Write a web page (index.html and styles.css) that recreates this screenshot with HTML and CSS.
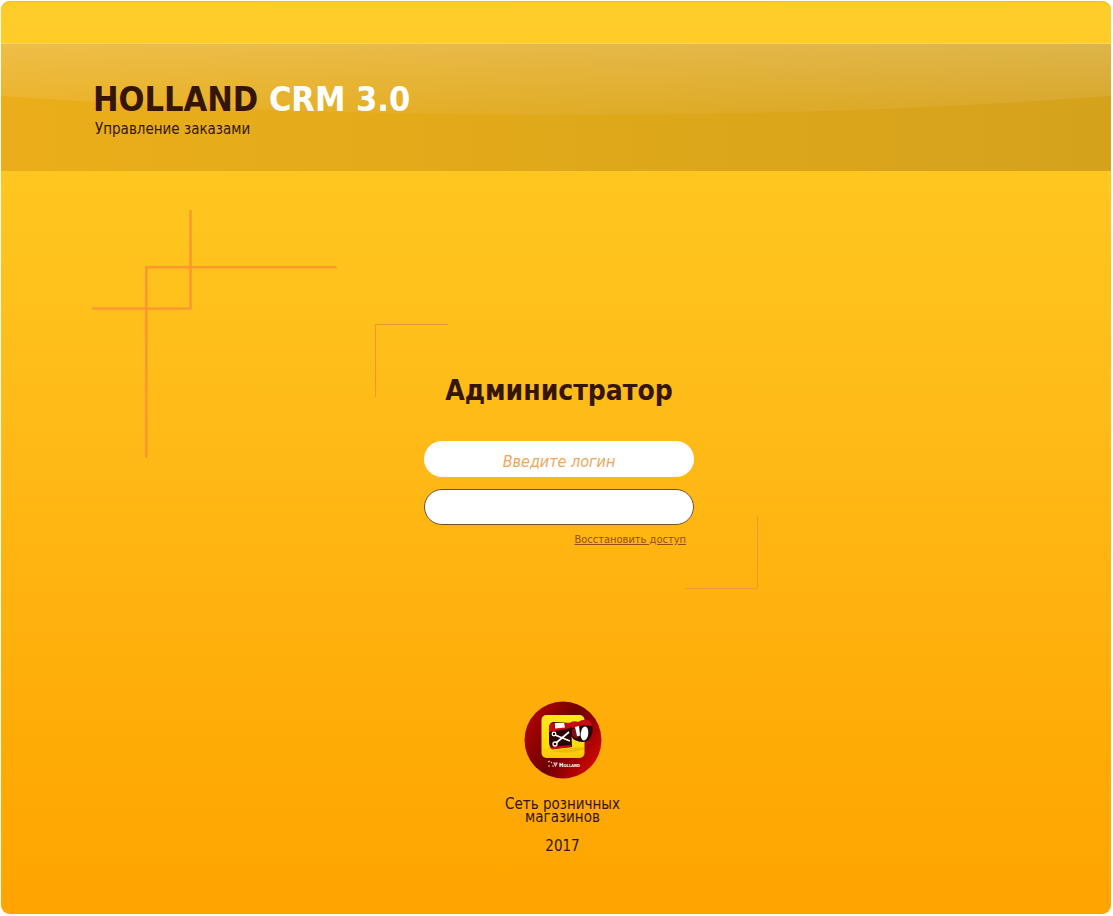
FILE: index.html
```html
<!DOCTYPE html>
<html lang="ru">
<head>
<meta charset="utf-8">
<meta name="viewport" content="width=device-width, initial-scale=1">
<title>HOLLAND CRM 3.0</title>
<link rel="stylesheet" href="styles.css">
</head>
<body>
<div class="panel">
  <header class="banner">
    <svg class="sheen" viewBox="0 0 1110 127" preserveAspectRatio="none" aria-hidden="true">
      <defs>
        <linearGradient id="gloss" x1="0" y1="0" x2="0" y2="1">
          <stop offset="0" stop-color="#fff" stop-opacity=".2"/>
          <stop offset="1" stop-color="#fff" stop-opacity=".05"/>
        </linearGradient>
      </defs>
      <path d="M0 0H1110V52Q850 71 560 71Q260 70 0 52Z" fill="url(#gloss)"/>
    </svg>
    <div class="brand">
      <h1 class="brand-name">HOLLAND <span class="brand-product">CRM 3.0</span></h1>
      <p class="brand-tagline">Управление заказами</p>
    </div>
  </header>

  <main class="content">
    <svg class="ornament" width="245" height="248" viewBox="0 0 245 248" aria-hidden="true">
      <g fill="none" stroke="#fb8f34" stroke-opacity=".82" stroke-width="2.6">
        <path d="M98.500 0V98.500H0"/>
        <path d="M244.500 57.200H54.300V247.500"/>
      </g>
    </svg>

    <form class="login">
      <h2 class="login-title">Администратор</h2>
      <input class="field" type="text" name="login" placeholder="Введите логин" aria-label="Логин">
      <input class="field field-outlined" type="password" name="password" aria-label="Пароль">
      <a class="restore" href="#">Восстановить доступ</a>
    </form>
  </main>

  <footer class="footer">
    <svg class="logo" width="78" height="78" viewBox="0 0 78 78" role="img" aria-label="Holland">
      <defs>
        <linearGradient id="disc" x1="0" y1=".2" x2="1" y2=".8">
          <stop offset="0" stop-color="#b40303"/>
          <stop offset=".28" stop-color="#8c0202"/>
          <stop offset=".5" stop-color="#6e0000"/>
          <stop offset=".72" stop-color="#a00101"/>
          <stop offset="1" stop-color="#da0a02"/>
        </linearGradient>
        <linearGradient id="tile" x1="0" y1="0" x2="0" y2="1">
          <stop offset="0" stop-color="#ffe819"/>
          <stop offset=".7" stop-color="#ffdc08"/>
          <stop offset="1" stop-color="#ffc50a"/>
        </linearGradient>
      </defs>
      <circle cx="39" cy="39" r="38.500" fill="url(#disc)"/>
      <rect x="17.500" y="14" width="43" height="43" rx="5" fill="url(#tile)"/>
      <path d="M27 50L48 47L60 46V49L42 52Z" fill="#d49a00" opacity=".4"/>
      <path d="M25 27Q25 22 29 21L47 22L48 46L28 48Q25 46 25 40Z" fill="#2a0204"/>
      <path d="M25 27Q25 22 30 22L47 22V27L25 31Z" fill="#c90912"/>
      <path d="M31 22L40 22L41 26.500L31 27.500Z" fill="#fff"/>
      <path d="M26 46L47 44V46L28 48.500Z" fill="#c90912"/>
      <path d="M46 25L66 20Q70 25 68 33Q66 40 60 41Q50 41 47 35Z" fill="#27040a"/>
      <path d="M45 22Q50 19 54 21Q60 17 66 20L69 25L59 24L50 27L45 26Z" fill="#ca0814"/>
      <path d="M48 28L52 27L54 37Q49 37 48 34Z" fill="#8c0712"/>
      <ellipse cx="60.500" cy="32.500" rx="3.800" ry="7" fill="#fff" transform="rotate(7 60.500 32.500)"/>
      <path d="M51 26L55 25L56 34Q55 36 53 35Z" fill="#fff"/>
      <g fill="none" stroke="#fff" stroke-width="1.300">
        <path d="M31 34L46 40M32 42L45 31" stroke-width="1.700"/>
        <circle cx="30" cy="33" r="1.800"/>
        <circle cx="31" cy="43" r="2"/>
      </g>
      <g fill="none" stroke="#e9b8b3" stroke-width="1.200">
        <path d="M24 61L26 60M24 65H26M27 61L28 62M28 65H30M30 62H33L31.500 65Z"/>
      </g>
      <text class="logo-text" x="35" y="66">H<tspan class="logo-small">OLLAND</tspan></text>
    </svg>
    <p class="footer-about">Сеть розничных<br>магазинов</p>
    <p class="footer-year">2017</p>
  </footer>
</div>
</body>
</html>
```
FILE: styles.css
```css
* {
  box-sizing: border-box;
}

body {
  margin: 0;
  padding: 1px 2px 2px 1px;
  background: #fff;
  color: #351503;
  font-family: "DejaVu Sans Condensed", "DejaVu Sans", sans-serif;
}

h1, h2, p {
  margin: 0;
}

.panel {
  display: flex;
  flex-direction: column;
  min-height: calc(100vh - 3px);
  padding: 42px 0 59px;
  border-radius: 9px;
  background: linear-gradient(#ffcd2a, #ffc61f 20%, #ffb714 55%, #ffab06 82%, #ffa400);
  box-shadow: inset 0 1px 1px #f0bf30, 0 0 1px #f5cf60;
}

.banner {
  position: relative;
  padding: 35px 92px 32px;
  border-top: 1px solid #f7d75c;
  background: linear-gradient(90deg, #ebae1a, #e1a91a 45%, #d5a21c);
}

.sheen {
  position: absolute;
  inset: 0;
  width: 100%;
  height: 100%;
}

.brand {
  position: relative;
}

.brand-name {
  font-size: 34px;
  line-height: 40px;
}

.brand-product {
  color: #fff;
}

.brand-tagline {
  padding-left: 2px;
  font-size: 15px;
  line-height: 20px;
}

.content {
  display: grid;
  grid-template-columns: 1fr 383px 1fr;
  align-items: start;
  padding: 39px 0 0 21px;
}

.ornament {
  margin-left: 70px;
}

.login {
  position: relative;
  display: flex;
  flex-direction: column;
  margin-top: 114px;
  padding: 47px 64px 41px 49px;
}

.login::before,
.login::after {
  content: "";
  position: absolute;
  width: 72px;
  height: 72px;
  border: 0 solid #f7942e;
}

.login::before {
  top: 0;
  left: 0;
  border-width: 1px 0 0 1px;
}

.login::after {
  right: 0;
  bottom: 0;
  border-width: 0 1px 1px 0;
}

.login-title {
  margin-bottom: 30px;
  font-size: 28px;
  line-height: 40px;
  text-align: center;
}

.field {
  width: 100%;
  height: 36px;
  margin-bottom: 12px;
  padding: 4px 16px 0;
  border: 0;
  border-radius: 18px;
  background: #fff;
  color: #351503;
  font: 16px "DejaVu Sans Condensed", "DejaVu Sans", sans-serif;
  text-align: center;
}

.field::placeholder {
  color: #f2a65c;
  font-style: italic;
  opacity: 1;
}

.field-outlined {
  margin-bottom: 7px;
  border: 1px solid #705030;
}

.restore {
  align-self: flex-end;
  margin-right: 8px;
  color: #94500a;
  font-size: 11px;
  line-height: 16px;
}

.footer {
  display: flex;
  flex-direction: column;
  align-items: center;
  margin-top: auto;
  padding-left: 13px;
  font-size: 15px;
  text-align: center;
}

.logo-text {
  fill: #fff;
  font-size: 6px;
  font-weight: bold;
}

.logo-small {
  font-size: 4px;
}

.footer-about {
  margin-top: 19px;
  line-height: 13px;
}

.footer-year {
  margin-top: 13px;
  line-height: 18px;
}
```
